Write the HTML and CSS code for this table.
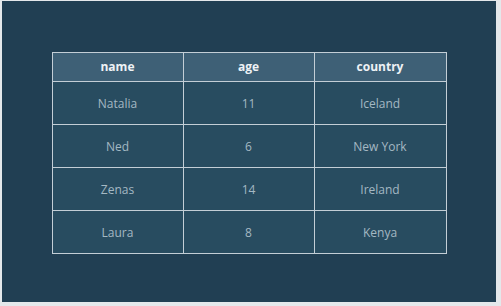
FILE: index.html
```html
<!DOCTYPE html>
<html>
<head>
<meta charset="utf-8">
<link rel="stylesheet" href="styles.css">
</head>
<body>
<div class="panel">
  <table class="data">
    <thead>
      <tr><th>name</th><th>age</th><th>country</th></tr>
    </thead>
    <tbody>
      <tr><td>Natalia</td><td>11</td><td>Iceland</td></tr>
      <tr><td>Ned</td><td>6</td><td>New York</td></tr>
      <tr><td>Zenas</td><td>14</td><td>Ireland</td></tr>
      <tr><td>Laura</td><td>8</td><td>Kenya</td></tr>
    </tbody>
  </table>
</div>
</body>
</html>
```
FILE: styles.css
```css
html, body {
  margin: 0;
  padding: 0;
}
body {
  background: #e4e8eb;
  width: 501px;
  height: 306px;
  overflow: hidden;
  font-family: "Open Sans", "Liberation Sans", sans-serif;
}
.panel {
  margin: 1px 5px 0 2px;
  padding-top: 2px;
  box-sizing: border-box;
  height: 301px;
  background: #213f53;
  display: flex;
  align-items: center;
  justify-content: center;
}
.data {
  border-collapse: collapse;
  border: 1px solid #c3ced6;
  font-size: 12px;
}
.data th, .data td {
  border: 1px solid #c3ced6;
  text-align: center;
  padding: 0;
}
.data th {
  background: #3e6076;
  color: #eef2f5;
  font-weight: 700;
  height: 28px;
}
.data td {
  background: #284c60;
  color: #a4b8c3;
  font-weight: 400;
  padding-top: 2px;
  height: 40px;
}
.data th:nth-child(1), .data th:nth-child(2) { width: 130px; }
.data th:nth-child(3) { width: 131px; }
```
